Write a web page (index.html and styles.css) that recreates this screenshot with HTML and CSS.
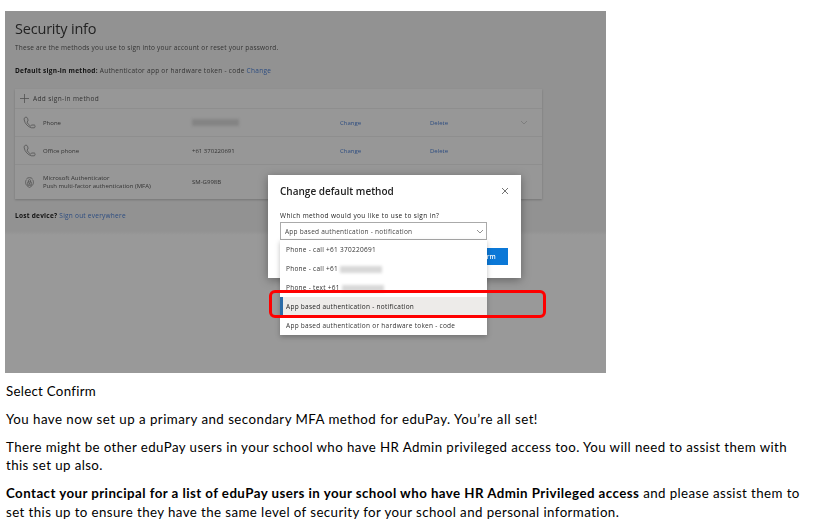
FILE: index.html
```html
<!DOCTYPE html>
<html lang="en">
<head>
    <meta charset="UTF-8">
    <meta name="viewport" content="width=device-width, initial-scale=1.0">
    <title>Change default method</title>
    <link rel="stylesheet" href="styles.css">
</head>
<body>
    <div class="screen">
        <div class="security">
            <h1 class="title">Security info</h1>
            <p class="intro">These are the methods you use to sign into your account or reset your password.</p>
            <p class="default-method"><b>Default sign-in method:</b> Authenticator app or hardware token - code <a>Change</a></p>

            <div class="methods">
                <div class="add-row">
                    <svg width="9" height="9" viewBox="0 0 9 9"><path d="M0 4.5h9M4.5 0v9"/></svg>
                    <span>Add sign-in method</span>
                </div>
                <div class="row">
                    <svg class="icon" width="13" height="13" viewBox="0 0 13 13"><path d="M3.2 1.2C1.6 1.2 1 2.2 1.2 3.8C1.7 7.4 5 11 8.6 11.8H11.2C12.2 11.8 12.4 9.2 11.4 9H8.8L7.6 10C5.8 9 4.6 7.6 4 6L5 5C5 3.6 4.6 1.2 3.2 1.2Z"/></svg>
                    <span>Phone</span>
                    <span><i class="redacted"></i></span>
                    <a>Change</a>
                    <a>Delete</a>
                    <svg class="chevron" width="8" height="5" viewBox="0 0 8 5"><path d="M1 1l3 3 3-3"/></svg>
                </div>
                <div class="row">
                    <svg class="icon" width="13" height="13" viewBox="0 0 13 13"><path d="M3.2 1.2C1.6 1.2 1 2.2 1.2 3.8C1.7 7.4 5 11 8.6 11.8H11.2C12.2 11.8 12.4 9.2 11.4 9H8.8L7.6 10C5.8 9 4.6 7.6 4 6L5 5C5 3.6 4.6 1.2 3.2 1.2Z"/></svg>
                    <span>Office phone</span>
                    <span>+61 370220691</span>
                    <a>Change</a>
                    <a>Delete</a>
                </div>
                <div class="row app-row">
                    <svg class="icon" width="13" height="13" viewBox="0 0 13 13"><path d="M3.4 3.6C1.8 6 2.4 9.6 6.5 11.4C10.6 9.6 11.2 6 9.6 3.6M3.6 2.6C5 1.4 8 1.4 9.4 2.6"/><path d="M4.8 6h3.4v3.2H4.8zM5.4 6V4.6C5.4 3.4 7.6 3.4 7.6 4.6V6M6.5 7v1.4"/></svg>
                    <span>Microsoft Authenticator<br>Push multi-factor authentication (MFA)</span>
                    <span>SM-G998B</span>
                </div>
            </div>

            <p class="lost"><b>Lost device?</b> <a>Sign out everywhere</a></p>
        </div>

        <div class="dialog">
            <div class="dialog-head">
                <h2>Change default method</h2>
                <svg width="8" height="8" viewBox="0 0 8 8"><path d="M1 1l6 6M7 1l-6 6"/></svg>
            </div>
            <p class="question">Which method would you like to use to sign in?</p>
            <div class="select">
                <span>App based authentication - notification</span>
                <svg class="chevron" width="8" height="5" viewBox="0 0 8 5"><path d="M1 1l3 3 3-3"/></svg>
            </div>
            <button class="confirm">Confirm</button>
            <ul class="options">
                <li>Phone - call +61 370220691</li>
                <li>Phone - call +61 <i class="redacted"></i></li>
                <li>Phone - text +61 <i class="redacted"></i></li>
                <li class="selected">App based authentication - notification</li>
                <li>App based authentication or hardware token - code</li>
            </ul>
        </div>

        <div class="highlight"></div>
    </div>

    <div class="instructions">
        <p class="step">Select Confirm</p>
        <p class="done">You have now set up a primary and secondary MFA method for eduPay. You’re all set!</p>
        <p>There might be other eduPay users in your school who have HR Admin privileged access too. You will need to assist them with<br>this set up also.</p>
        <p><b>Contact your principal for a list of eduPay users in your school who have HR Admin Privileged access</b> and please assist them to<br>set this up to ensure they have the same level of security for your school and personal information.</p>
    </div>
</body>
</html>
```

FILE: styles.css
```css
body {
    margin: 0;
    background: #fff;
    overflow: hidden;
}

p, h1, h2, ul {
    margin: 0;
    padding: 0;
    font-weight: normal;
    white-space: nowrap;
}

svg {
    fill: none;
    stroke: #505050;
    stroke-width: 0.8;
    flex-shrink: 0;
}

.screen {
    position: relative;
    box-sizing: border-box;
    width: 601px;
    height: 362px;
    margin: 11px 0 0 5px;
    background: linear-gradient(#929292 220px, #999 224px);
    font-family: "Open Sans", "Noto Sans", sans-serif;
    font-size: 6.5px;
    letter-spacing: 0.25px;
    color: #333;
}

.screen a {
    color: #2c4c80;
}

.security {
    padding: 8px 0 0 10px;
    filter: blur(0.4px);
}

.title {
    font-size: 14.5px;
    line-height: 20px;
    letter-spacing: -0.2px;
    color: #222;
}

.intro {
    margin-top: 4px;
    line-height: 10px;
    letter-spacing: 0.23px;
}

.default-method {
    margin-top: 13px;
    line-height: 10px;
    letter-spacing: 0.28px;
}

.default-method b, .lost b {
    color: #111;
}

.methods {
    width: 527px;
    margin-top: 13px;
    background: #979797;
    box-shadow: 0 1px 2px rgba(0, 0, 0, 0.2);
}

.add-row {
    display: flex;
    align-items: center;
    gap: 4px;
    height: 19px;
    padding-left: 5px;
    letter-spacing: 0.38px;
}

.row {
    display: grid;
    grid-template-columns: 20px 149px 148px 90px 90px 10px;
    align-items: center;
    height: 27px;
    padding-left: 8px;
    border-top: 1px solid #8e8e8e;
    font-size: 6px;
    line-height: 8px;
    letter-spacing: 0;
    white-space: nowrap;
}

.app-row {
    height: 34px;
}

.chevron {
    stroke: #777;
}

.redacted {
    display: inline-block;
    width: 47px;
    height: 7px;
    background: #848484;
    filter: blur(1.5px);
    vertical-align: middle;
}

.lost {
    margin-top: 12px;
    line-height: 10px;
}

.dialog {
    position: absolute;
    left: 263px;
    top: 164px;
    box-sizing: border-box;
    width: 253px;
    height: 103px;
    padding: 9px 12px 0 12px;
    background: #fff;
    box-shadow: 0 2px 9px rgba(0, 0, 0, 0.35);
    filter: blur(0.35px);
}

.dialog-head {
    display: flex;
    justify-content: space-between;
    align-items: center;
}

.dialog-head h2 {
    font-size: 10px;
    font-weight: 600;
    line-height: 14px;
    letter-spacing: 0;
    color: #222;
}

.question {
    margin-top: 13px;
    line-height: 10px;
    letter-spacing: 0.38px;
    color: #222;
}

.select {
    display: flex;
    justify-content: space-between;
    align-items: center;
    box-sizing: border-box;
    width: 207px;
    height: 18px;
    margin-top: 1px;
    padding: 0 2px 0 4px;
    border: 1px solid #aaa;
    color: #444;
}

.confirm {
    display: block;
    box-sizing: border-box;
    width: 50px;
    height: 17px;
    margin: 8px 0 0 178px;
    padding: 0;
    border: none;
    background: #0b78d7;
    font-family: inherit;
    font-size: 6.5px;
    font-weight: 600;
    color: #fff;
}

.options {
    position: absolute;
    left: 12px;
    top: 65px;
    width: 207px;
    background: #fff;
    box-shadow: 0 2px 5px rgba(0, 0, 0, 0.25);
    list-style: none;
    letter-spacing: 0.27px;
    color: #333;
}

.options li {
    box-sizing: border-box;
    height: 19px;
    padding-left: 6px;
    line-height: 19px;
}

.options .selected {
    padding-left: 3px;
    border-left: 3px solid #2b6ca8;
    background: #edebe9;
    color: #222;
}

.options .redacted {
    width: 42px;
    background: #d8d8d8;
}

.highlight {
    position: absolute;
    left: 264px;
    top: 279px;
    box-sizing: border-box;
    width: 277px;
    height: 28px;
    border: 3px solid #f00;
    border-radius: 6px;
}

.instructions {
    display: flex;
    flex-direction: column;
    gap: 9.6px;
    padding: 9px 0 0 6px;
    font-family: Lato, Carlito, sans-serif;
    font-size: 13.3px;
    line-height: 18.4px;
    letter-spacing: 0.41px;
    color: #000;
}

.instructions b {
    letter-spacing: 0.44px;
}

.instructions .step {
    letter-spacing: 0.28px;
}

.instructions .done {
    letter-spacing: 0.46px;
}
```
